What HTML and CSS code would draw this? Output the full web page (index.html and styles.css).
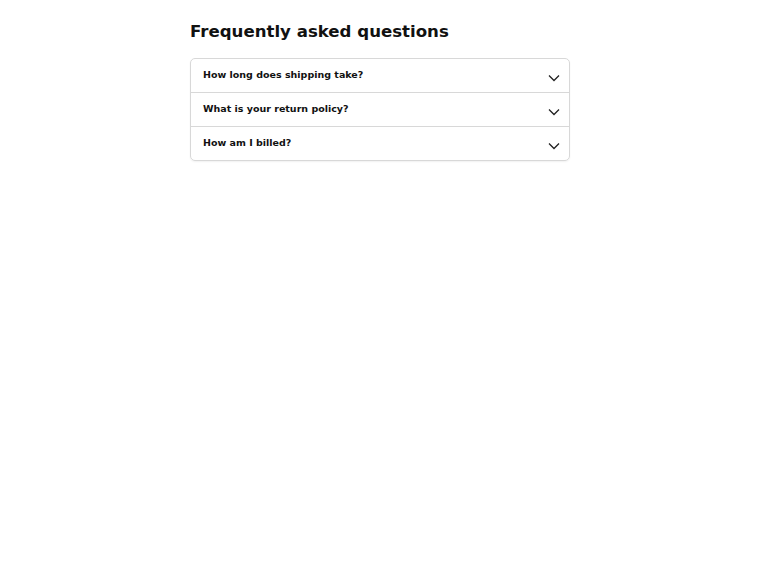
FILE: index.html
```html
<!DOCTYPE html>
<html lang="en">
<head>
    <meta charset="UTF-8">
    <meta name="viewport" content="width=device-width, initial-scale=1.0">
    <title>FAQ</title>
    <link rel="stylesheet" href="styles.css">
</head>
<body>
    <div class="container">
        <h1>Frequently asked questions</h1>

        <div class="faq">
            <div class="faq-item">
                <span class="question">How long does shipping take?</span>
                <svg class="chevron" viewBox="0 0 12 8" width="12" height="8"><path d="M1 1.5l5 5 5-5" fill="none" stroke="#222" stroke-width="1.3"/></svg>
            </div>
            <div class="faq-item">
                <span class="question">What is your return policy?</span>
                <svg class="chevron" viewBox="0 0 12 8" width="12" height="8"><path d="M1 1.5l5 5 5-5" fill="none" stroke="#222" stroke-width="1.3"/></svg>
            </div>
            <div class="faq-item">
                <span class="question">How am I billed?</span>
                <svg class="chevron" viewBox="0 0 12 8" width="12" height="8"><path d="M1 1.5l5 5 5-5" fill="none" stroke="#222" stroke-width="1.3"/></svg>
            </div>
        </div>
    </div>
</body>
</html>
```

FILE: styles.css
```css
body {
    font-family: "DejaVu Sans", sans-serif;
    margin: 0;
    padding: 21px 0 20px;
    background-color: #fff;
    color: #111;
}

.container {
    max-width: 380px;
    margin: 0 auto;
}

h1 {
    font-size: 16.6px;
    font-weight: bold;
    margin: 0 0 15px;
    line-height: 22px;
}

.faq {
    border: 1px solid #d8d8d8;
    border-radius: 5px;
    box-shadow: 0 1px 2px rgba(0,0,0,0.06);
}

.faq-item {
    display: flex;
    justify-content: space-between;
    align-items: center;
    height: 33px;
    padding: 0 9px 0 12px;
    font-size: 9.5px;
    font-weight: bold;
    border-bottom: 1px solid #d8d8d8;
}

.faq-item:last-child {
    border-bottom: none;
}

.question {
    padding-bottom: 2px;
}

.chevron {
    margin-top: 4px;
}
```
